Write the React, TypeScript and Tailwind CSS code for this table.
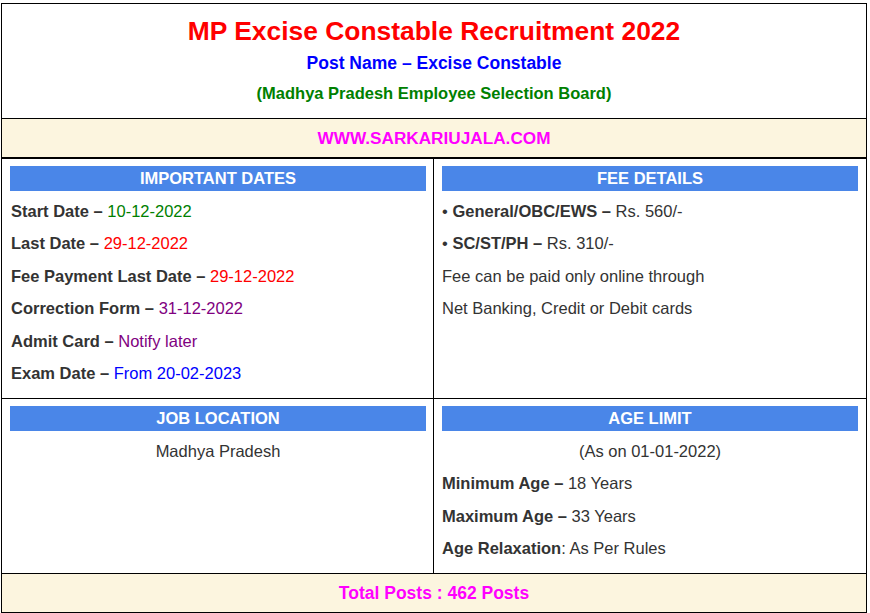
// Recruitment notice card: header, site strip, two-by-two info grid, total posts strip.

const BAR = "flex h-[25px] items-center justify-center bg-[#4a86e8] text-[16.5px] font-bold text-white";
const LINE = "leading-[32.4px] text-[16.5px] text-[#333]";

function Bar({ children }: { children: React.ReactNode }) {
  return <div className={BAR}>{children}</div>;
}

function Row({ label, value, color }: { label: string; value: string; color: string }) {
  return (
    <p className={`${LINE} pl-px`}>
      <b>{label} – </b>
      <span className={color}>{value}</span>
    </p>
  );
}

export default function App() {
  return (
    <div className="bg-white pl-px pt-[3px] font-['Liberation_Sans',Arial,sans-serif]">
      <div className="w-[866px] border border-black">
        <header className="h-[115px] border-b border-black pt-[9px] text-center font-bold">
          <h1 className="text-[26.4px] leading-[36px] text-[#ff0000]">
            MP Excise Constable Recruitment 2022
          </h1>
          <div className="text-[17.5px] leading-[29px] text-[#0000ff]">
            Post Name – Excise Constable
          </div>
          <div className="text-[16.5px] leading-[30px] text-[#008000]">
            (Madhya Pradesh Employee Selection Board)
          </div>
        </header>

        <div className="flex h-[40px] items-center justify-center border-b-2 border-black bg-[#fcf5df] pt-px text-[17.2px] font-bold text-[#ff00ff]">
          WWW.SARKARIUJALA.COM
        </div>

        <div className="grid grid-cols-[432px_1fr] border-b border-black">
          <section className="h-[239px] border-r border-black pl-2 pr-[7px] pt-[7px]">
            <Bar>IMPORTANT DATES</Bar>
            <div className="mt-1">
              <Row label="Start Date" value="10-12-2022" color="text-[#008000]" />
              <Row label="Last Date" value="29-12-2022" color="text-[#ff0000]" />
              <Row label="Fee Payment Last Date" value="29-12-2022" color="text-[#ff0000]" />
              <Row label="Correction Form" value="31-12-2022" color="text-[#800080]" />
              <Row label="Admit Card" value="Notify later" color="text-[#800080]" />
              <Row label="Exam Date" value="From 20-02-2023" color="text-[#0000ff]" />
            </div>
          </section>
          <section className="h-[239px] px-2 pt-[7px]">
            <Bar>FEE DETAILS</Bar>
            <div className="mt-1">
              <p className={LINE}>
                • <b>General/OBC/EWS – </b>Rs. 560/-
              </p>
              <p className={LINE}>
                • <b>SC/ST/PH – </b>Rs. 310/-
              </p>
              <p className={LINE}>Fee can be paid only online through</p>
              <p className={LINE}>Net Banking, Credit or Debit cards</p>
            </div>
          </section>
        </div>

        <div className="grid grid-cols-[432px_1fr] border-b border-black">
          <section className="h-[174px] border-r border-black pl-2 pr-[7px] pt-[7px]">
            <Bar>JOB LOCATION</Bar>
            <p className={`${LINE} mt-1 text-center`}>Madhya Pradesh</p>
          </section>
          <section className="h-[174px] px-2 pt-[7px]">
            <Bar>AGE LIMIT</Bar>
            <div className="mt-1">
              <p className={`${LINE} text-center`}>(As on 01-01-2022)</p>
              <p className={LINE}>
                <b>Minimum Age – </b>18 Years
              </p>
              <p className={LINE}>
                <b>Maximum Age – </b>33 Years
              </p>
              <p className={LINE}>
                <b>Age Relaxation</b>: As Per Rules
              </p>
            </div>
          </section>
        </div>

        <div className="flex h-[38px] items-center justify-center bg-[#fcf5df] text-[17.5px] font-bold text-[#ff00ff]">
          Total Posts : 462 Posts
        </div>
      </div>
    </div>
  );
}
